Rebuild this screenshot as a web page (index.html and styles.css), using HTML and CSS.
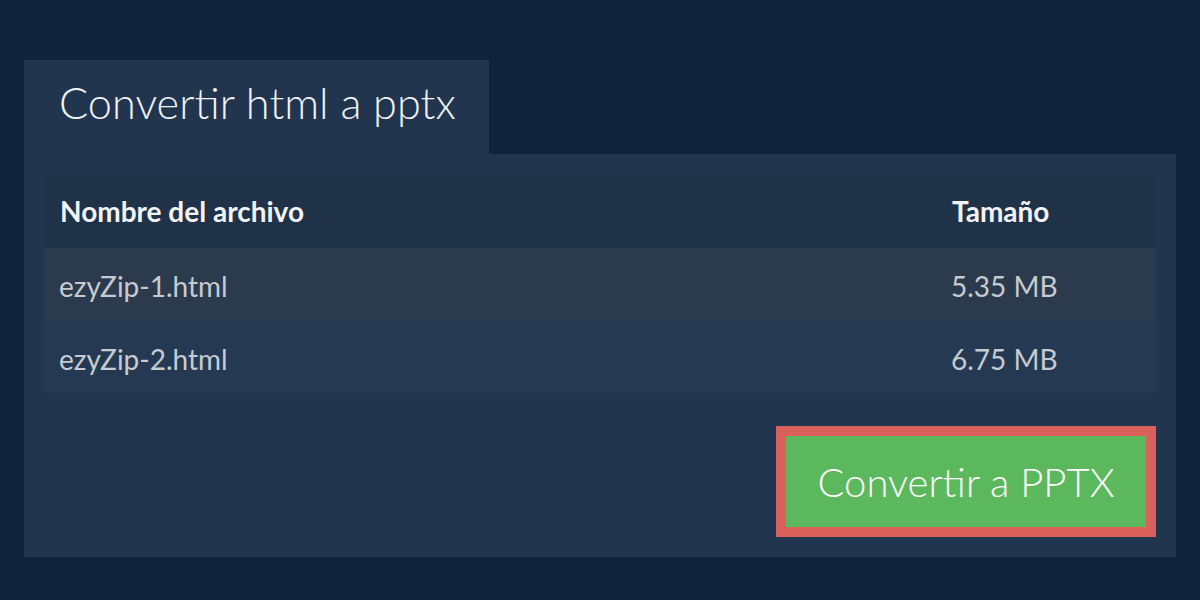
FILE: index.html
```html
<!DOCTYPE html>
<html lang="es">
<head>
<meta charset="utf-8">
<title>Convertir html a pptx</title>
<link rel="stylesheet" href="styles.css">
</head>
<body>
<div class="page">
  <div class="tab">Convertir html a pptx</div>
  <div class="panel">
    <div class="table">
      <div class="row head">
        <div class="name">Nombre del archivo</div>
        <div class="size">Tamaño</div>
      </div>
      <div class="row odd">
        <div class="name">ezyZip-1.html</div>
        <div class="size">5.35 MB</div>
      </div>
      <div class="row even">
        <div class="name">ezyZip-2.html</div>
        <div class="size">6.75 MB</div>
      </div>
    </div>
    <div class="actions">
      <div class="btn-frame"><div class="btn">Convertir a PPTX</div></div>
    </div>
  </div>
</div>
</body>
</html>
```

FILE: styles.css
```css
html, body {
  margin: 0;
  padding: 0;
  background: #10233a;
  font-family: Lato, "Liberation Sans", sans-serif;
}
.page {
  padding: 60px 24px 0 24px;
  width: 1152px;
}
.tab {
  width: 465px;
  height: 94px;
  box-sizing: border-box;
  background: #21354e;
  color: #f0f2f4;
  font-weight: 300;
  font-size: 43.3px;
  padding: 14px 0 0 35px;
  line-height: 56px;
}
.panel {
  background: #21354e;
  height: 403px;
  box-sizing: border-box;
  padding: 22px 20px 0 20px;
}
.table {
  display: flex;
  flex-direction: column;
}
.row {
  display: grid;
  grid-template-columns: 1fr 205px;
  align-items: center;
  height: 72px;
  box-sizing: border-box;
  padding-top: 2px;
  font-size: 28px;
  color: #c6cbd1;
}
.row .name { padding-left: 15px; }
.row.head {
  background: #1f3248;
  color: #f2f3f5;
  font-weight: 700;
  padding-top: 0;
  padding-bottom: 2px;
}
.row.head .name,
.row.head .size { padding-left: 16px; }
.row.head .size { padding-left: 1px; }
.row.odd { background: #2b3b4d; height: 74px; }
.row.even { background: #253a52; height: 71px; }
.actions {
  display: flex;
  justify-content: flex-end;
  padding-top: 33px;
}
.btn-frame {
  border: 10px solid #da605c;
  background: #5cb85c;
}
.btn {
  width: 360px;
  height: 91px;
  display: flex;
  align-items: center;
  justify-content: center;
  color: #ffffff;
  font-weight: 300;
  font-size: 40px;
}
```
